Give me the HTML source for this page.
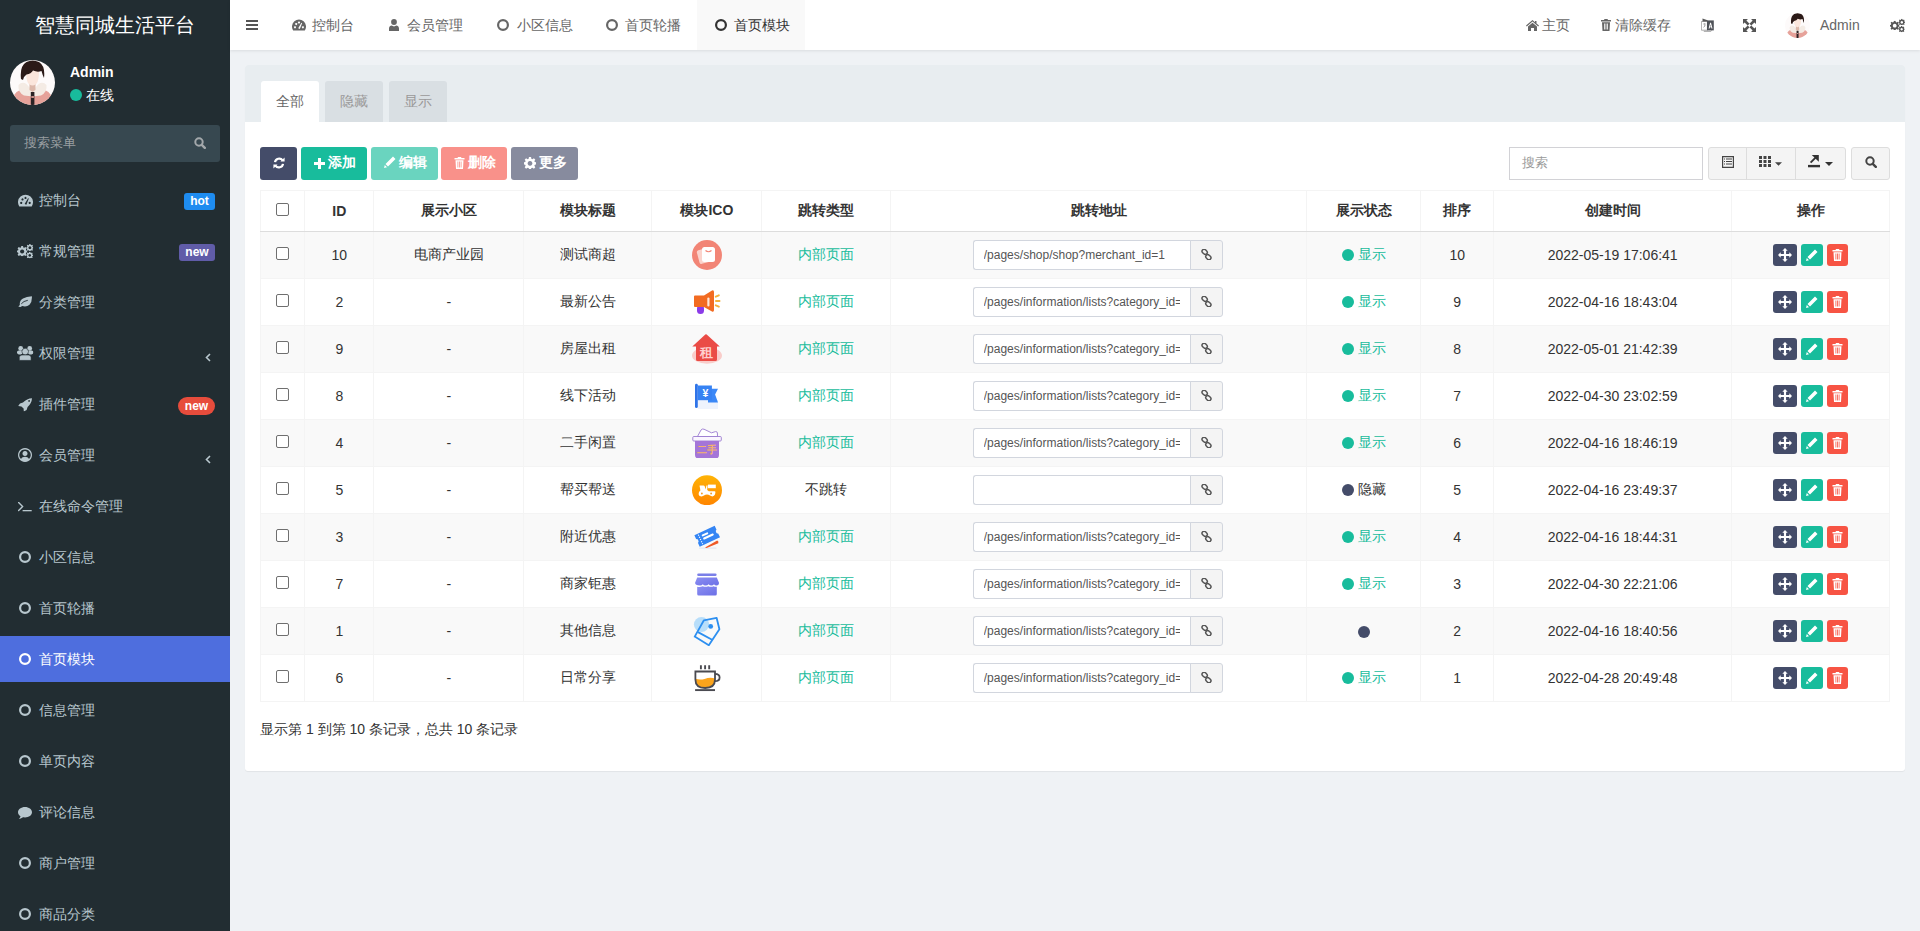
<!DOCTYPE html>
<html><head><meta charset="utf-8"><style>*{box-sizing:border-box}
html,body{margin:0;padding:0}
body{width:1920px;height:931px;overflow:hidden;position:relative;background:#eff2f5;font-family:"Liberation Sans",sans-serif;color:#333;font-size:14px}
.abs{position:absolute}
.nw{white-space:nowrap}
svg{display:block;overflow:visible}
#sb{position:absolute;left:0;top:0;width:230px;height:931px;background:#222d32;overflow:hidden}
#logo{position:absolute;left:0;top:0;width:230px;height:50px;line-height:50px;text-align:center;color:#fff;font-size:20px;white-space:nowrap}
.mi{position:absolute;left:0;width:230px;height:46px;color:#b8c7ce;font-size:14px}
.mi .tx{position:absolute;left:39px;top:0;line-height:46px;white-space:nowrap}
.mi.act{background:#4e6ede;color:#fff}
.badge{position:absolute;color:#fff;font-weight:bold;font-size:12px;text-align:center;line-height:17px;height:17px;border-radius:3px}
#hd{position:absolute;left:230px;top:0;width:1690px;height:50px;background:#fff;box-shadow:0 1px 3px rgba(0,0,0,0.09)}
#card{position:absolute;left:245px;top:65px;width:1660px;height:706px;background:#fff;border-radius:3px;overflow:hidden;box-shadow:0 1px 1px rgba(0,0,0,0.06)}
#ph{position:absolute;left:0;top:0;width:1660px;height:57px;background:#e8edf0}
.tab{position:absolute;top:16px;height:41px;width:58px;line-height:40px;text-align:center;font-size:14px;color:#999;background:#d9dfe3;border-radius:3px 3px 0 0}
.tab.act{background:#fff;color:#666}
.btn{position:absolute;top:82px;height:33px;border-radius:3px;color:#fff;font-size:14px;font-weight:bold;line-height:33px}
table{border-collapse:collapse;table-layout:fixed;position:absolute;left:15px;top:125px}
td,th{border:1px solid #f4f4f4;text-align:center;padding:0;font-size:14px;white-space:nowrap}
th{height:41px;font-weight:bold;color:#333;border-bottom:1px solid #ddd}
td{height:47px;color:#333}
tr.odd td{background:#f9f9f9}
.cb{display:inline-block;width:13px;height:13px;border:1px solid #6f6f6f;border-radius:2px;background:#fff;vertical-align:middle;position:relative;top:-3px}
.ig{display:inline-block;position:relative;left:-1px;width:250px;height:30px;vertical-align:middle;text-align:left}
.ig .in{position:absolute;left:0;top:0;width:218px;height:30px;border:1px solid #d2d6de;border-right:none;border-radius:3px 0 0 3px;background:#fff;font-size:12px;line-height:28px;padding-left:10px;color:#555;overflow:hidden;white-space:nowrap}
.ig .ad{position:absolute;left:217px;top:0;width:33px;height:30px;border:1px solid #d2d6de;border-radius:0 3px 3px 0;background:#f4f4f4}
.ok{color:#18bc9c}
.dot{display:inline-block;width:12px;height:12px;border-radius:50%;background:#18bc9c;vertical-align:-2px;margin-right:4px}
.ab{display:inline-block;height:22px;border-radius:3px;vertical-align:middle;position:relative}

.ig .cl{width:196px;overflow:hidden}
</style></head><body>
<svg width="0" height="0" style="position:absolute"><defs><symbol id="i-circle" viewBox="0 0 12 12"><circle cx="6" cy="6" r="4.9" fill="none" stroke="currentColor" stroke-width="2.2"/></symbol>
<symbol id="i-bars" viewBox="0 0 12 10"><rect x="0" y="0" width="12" height="2" fill="currentColor"/><rect x="0" y="4" width="12" height="2" fill="currentColor"/><rect x="0" y="8" width="12" height="2" fill="currentColor"/></symbol>
<symbol id="i-dash" viewBox="0 0 14 12"><path fill="currentColor" fill-rule="evenodd" d="M1.2 11.5A7 7 0 1 1 12.8 11.5Z M3 7.2a1 1 0 1 0 0.01 0Z M4.2 4a1 1 0 1 0 0.01 0Z M7 2.6a1 1 0 1 0 0.01 0Z M10.9 7.2a1 1 0 1 0 0.01 0Z M6.2 9.2L9.4 3.8L10.1 4.2L7.8 10Z"/></symbol>
<symbol id="i-user" viewBox="0 0 10 12"><circle cx="5" cy="3" r="2.9" fill="currentColor"/><path fill="currentColor" d="M0 12V9.6C0 7.5 1.4 6.6 2.6 6.6L5 7.6L7.4 6.6C8.6 6.6 10 7.5 10 9.6V12Z"/></symbol>
<symbol id="i-home" viewBox="0 0 13 11"><path fill="currentColor" d="M6.5 0L0 5.6L0.8 6.4L6.5 1.6L12.2 6.4L13 5.6L10.5 3.5V1H9V2.2Z M2 6.6L6.5 2.8L11 6.6V11H8V8H5V11H2Z"/></symbol>
<symbol id="i-trash" viewBox="0 0 10 12"><path fill="currentColor" fill-rule="evenodd" d="M3.5 0H6.5L7 1H10V2.5H0V1H3Z M1 3.2H9L8.5 12H1.5Z M3 4.5V10.5H3.8V4.5Z M4.6 4.5V10.5H5.4V4.5Z M6.2 4.5V10.5H7V4.5Z"/></symbol>
<symbol id="i-expand" viewBox="0 0 13 13"><path fill="currentColor" d="M0 0H5L3.4 1.6L6.5 4.7L4.7 6.5L1.6 3.4L0 5Z M13 0V5L11.4 3.4L8.3 6.5L6.5 4.7L9.6 1.6L8 0Z M0 13V8L1.6 9.6L4.7 6.5L6.5 8.3L3.4 11.4L5 13Z M13 13H8L9.6 11.4L6.5 8.3L8.3 6.5L11.4 9.6L13 8Z"/></symbol>
<symbol id="i-gear" viewBox="0 0 16 16"><path fill="currentColor" fill-rule="evenodd" d="M6.6 0H9.4L9.8 2.2L11.3 2.9L13.2 1.6L15.1 3.5L13.8 5.3L14.4 6.8L16 7.1V9.9L14.4 10.2L13.8 11.7L15.1 13.6L13.2 15.5L11.3 14.2L9.8 14.8L9.4 16H6.6L6.2 14.8L4.7 14.2L2.8 15.5L0.9 13.6L2.2 11.7L1.6 10.2L0 9.9V7.1L1.6 6.8L2.2 5.3L0.9 3.5L2.8 1.6L4.7 2.9L6.2 2.2Z M8 5.3A3.2 3.2 0 1 0 8.01 5.3Z"/></symbol>
<symbol id="i-cogs" viewBox="0 0 16.4 14.5"><use href="#i-gear" x="0" y="2" width="10.3" height="10.3"/><use href="#i-gear" x="9.4" y="0" width="7" height="7"/><use href="#i-gear" x="9.4" y="7.8" width="6.7" height="6.7"/></symbol>
<symbol id="i-refresh" viewBox="0 0 12 12"><path fill="none" stroke="currentColor" stroke-width="2.2" d="M2 5.2A4.2 4.2 0 0 1 9.6 3.4 M10 6.8A4.2 4.2 0 0 1 2.4 8.6"/><path fill="currentColor" d="M7.4 4.6H11.6V0.4Z M4.6 7.4H0.4V11.6Z"/></symbol>
<symbol id="i-plus" viewBox="0 0 11 11"><path fill="currentColor" d="M4 0H7V4H11V7H7V11H4V7H0V4H4Z"/></symbol>
<symbol id="i-pencil" viewBox="0 0 12 12"><path fill="currentColor" d="M9 0.5L11.5 3L4 10.5L1.5 8Z M0.8 9L3 11.2L0 12Z"/></symbol>
<symbol id="i-listalt" viewBox="0 0 12 12"><path fill="currentColor" fill-rule="evenodd" d="M0 0H12V12H0Z M1.2 1.2V10.8H10.8V1.2Z M2 2.5H3V3.5H2Z M4 2.5H10V3.5H4Z M2 5H3V6H2Z M4 5H10V6H4Z M2 7.5H3V8.5H2Z M4 7.5H10V8.5H4Z"/></symbol>
<symbol id="i-th" viewBox="0 0 12 11"><path fill="currentColor" d="M0 0H3V3H0Z M4.5 0H7.5V3H4.5Z M9 0H12V3H9Z M0 4H3V7H0Z M4.5 4H7.5V7H4.5Z M9 4H12V7H9Z M0 8H3V11H0Z M4.5 8H7.5V11H4.5Z M9 8H12V11H9Z"/></symbol>
<symbol id="i-caret" viewBox="0 0 8 4"><path fill="currentColor" d="M0 0H8L4 4Z"/></symbol>
<symbol id="i-export" viewBox="0 0 12.2 12.6"><rect x="0" y="9.9" width="12.1" height="2.7" fill="currentColor"/><path fill="currentColor" d="M3.8 0H10.8V6.7Z"/><path stroke="currentColor" stroke-width="1.9" d="M2.6 7.6L7.8 2.4"/></symbol>
<symbol id="i-search" viewBox="0 0 12 12"><circle cx="5" cy="5" r="3.7" fill="none" stroke="currentColor" stroke-width="2"/><path stroke="currentColor" stroke-width="2.4" stroke-linecap="round" d="M7.8 7.8L10.8 10.8"/></symbol>
<symbol id="i-link" viewBox="0 0 12 12"><g fill="none" stroke="currentColor" stroke-width="1.6"><rect x="0.9" y="0.9" width="6.2" height="4.4" rx="2.2" transform="rotate(45 4 3.1)"/><rect x="4.9" y="6.7" width="6.2" height="4.4" rx="2.2" transform="rotate(45 8 8.9)"/></g></symbol>
<symbol id="i-move" viewBox="0 0 13 13"><path fill="currentColor" d="M6.5 0L9 2.5H7.5V5.5H10.5V4L13 6.5L10.5 9V7.5H7.5V10.5H9L6.5 13L4 10.5H5.5V7.5H2.5V9L0 6.5L2.5 4V5.5H5.5V2.5H4Z"/></symbol>
<symbol id="i-leaf" viewBox="0 0 14.1 11.1"><path fill="currentColor" d="M0.3 10.6L1.9 9.1Q1 5 5 2.5Q8.5 0.5 13.9 0.3Q14.2 6 11.5 8.8Q8.5 11.5 4.2 10.1L2.4 11.1Z"/><path fill="none" stroke="#222d32" stroke-width="0.9" d="M3.3 7.8Q5.5 5 9.8 4.3"/></symbol>
<symbol id="i-users" viewBox="0 0 16.4 14.4"><circle cx="3.7" cy="2.4" r="2.4" fill="currentColor"/><circle cx="12.7" cy="2.4" r="2.4" fill="currentColor"/><rect x="0" y="4.4" width="5.6" height="4" rx="1.8" fill="currentColor"/><rect x="10.8" y="4.4" width="5.6" height="4" rx="1.8" fill="currentColor"/><circle cx="8.2" cy="5.6" r="3.3" fill="currentColor" stroke="#222d32" stroke-width="0.6"/><path fill="currentColor" stroke="#222d32" stroke-width="0.6" d="M2.3 14.4V11.6Q2.3 9 5 9H11.4Q14.1 9 14.1 11.6V14.4Z"/></symbol>
<symbol id="i-rocket" viewBox="0 0 14 13.4"><path fill="currentColor" d="M14 0.2Q13.8 5 9.6 9L8.6 12L5.8 13.4L5.6 10.6L3.4 8.4L0.2 8L2 5.5L5 4.6Q9 0.4 14 0.2Z"/><circle cx="11.1" cy="2.9" r="0.85" fill="#222d32"/></symbol>
<symbol id="i-ucircle" viewBox="0 0 14 14"><path fill="currentColor" fill-rule="evenodd" d="M7 0A7 7 0 1 0 7.01 0Z M7 1.4A5.6 5.6 0 0 0 3 11C3.8 9.6 5.2 8.8 7 8.8C8.8 8.8 10.2 9.6 11 11A5.6 5.6 0 0 0 7 1.4Z M7 3A2.5 2.5 0 1 0 7.01 3Z"/></symbol>
<symbol id="i-term" viewBox="0 0 14 10"><path fill="none" stroke="currentColor" stroke-width="1.4" stroke-linecap="round" d="M0.6 0.6L4.6 4.6L0.6 8.6"/><rect x="4.6" y="8" width="9.1" height="1.3" fill="currentColor"/></symbol>
<symbol id="i-comment" viewBox="0 0 14 12"><path fill="currentColor" d="M7 0C3.1 0 0 2.3 0 5.2C0 6.8 1 8.2 2.5 9.2C2.3 10.3 1.6 11.3 0.8 12C2.6 11.8 4 11.1 5 10.3C5.6 10.4 6.3 10.4 7 10.4C10.9 10.4 14 8.1 14 5.2C14 2.3 10.9 0 7 0Z"/></symbol>
<symbol id="i-angle" viewBox="0 0 6 9"><path fill="none" stroke="currentColor" stroke-width="1.6" d="M5 1L1.5 4.5L5 8"/></symbol>
<symbol id="i-lang" viewBox="0 0 13 14"><path fill="#fff" stroke="#8a8a8a" stroke-width="0.7" d="M0.4 3.5H6.4V12.2H0.4Z"/><path fill="#5a5a5a" d="M1.5 0.5L6.5 2.2V3.4H1.5Z"/><path fill="none" stroke="#999" stroke-width="0.6" d="M2 6H5 M3.5 5V9 M2.2 9.5L4.8 7"/><path fill="#4f5258" d="M6 2.4H12.8V12.4H6Z"/><path fill="#fff" d="M7.6 10.5L9.1 4.8H10L11.5 10.5H10.5L10.2 9.3H8.9L8.6 10.5Z M9.1 8.4H10L9.55 6.5Z"/><path fill="none" stroke="#777" stroke-width="0.7" d="M2.8 13.3H9.8L10.8 12.4"/></symbol>
<symbol id="c1" viewBox="0 0 30 30"><circle cx="15" cy="15" r="15" fill="#f28576"/><rect x="6" y="9" width="13" height="14" rx="2" fill="#fbd3cc" transform="rotate(-15 12 16)"/><rect x="10" y="7" width="13" height="15" rx="2.5" fill="#fff"/><path d="M13.5 10.5Q16.5 13 19.5 10.5" fill="none" stroke="#f28576" stroke-width="1.2"/></symbol>
<symbol id="c2" viewBox="0 0 30 30"><rect x="5" y="18" width="7" height="9" rx="3.5" fill="#8b3be8"/><path fill="#f26b21" d="M3 8.5H12L20 3.5Q22 2.8 22 5V23Q22 25.2 20 24.5L12 20H3Q2 20 2 19V9.5Q2 8.5 3 8.5Z"/><rect x="15.3" y="10.5" width="2.2" height="9" rx="1.1" fill="#ffe6d6"/><path stroke="#f3b23e" stroke-width="2" stroke-linecap="round" d="M23.8 9.6L26.8 8.4 M24 14H27.5 M23.8 18.4L26.8 19.6"/></symbol>
<symbol id="c3" viewBox="0 0 30 30"><ellipse cx="15" cy="21.5" rx="15" ry="8.3" fill="#f9cdca"/><path fill="#ea4c46" d="M13.3 0.6Q14 0 14.7 0.6L27.8 12.4H25V25.5Q25 27 23.5 27H5.5Q4 27 4 25.5V12.4H0.3Z"/><text x="14" y="22.6" font-size="12.5" font-weight="bold" fill="#ffd0cf" text-anchor="middle" font-family="Liberation Sans,sans-serif">租</text></symbol>
<symbol id="c4" viewBox="0 0 30 30"><rect x="6" y="19" width="20" height="9" fill="#eef3fd"/><path fill="#3b88f7" d="M16 7.7H26L23.1 13.6L26 21.4H16Z"/><path fill="#3682f3" d="M5.8 4.5H19.9V19.2H5.8Z"/><rect x="3" y="2.8" width="2.8" height="24.3" rx="1.4" fill="#2f74e8"/><text x="13.4" y="16.3" font-size="10.5" font-weight="bold" fill="#fff" text-anchor="middle" font-family="Liberation Sans,sans-serif">¥</text></symbol>
<symbol id="c5" viewBox="0 0 30 30"><path fill="#fff" stroke="#9b7bd0" stroke-width="0.9" d="M5.5 8.5L9 2Q10 0.5 12 1.2L19.5 4.8L23.5 3.6Q25.3 3.4 25.4 5L25.5 8.5Z"/><rect x="0.8" y="8.5" width="28.5" height="4.5" rx="1" fill="#fbf6ff" stroke="#9b7bd0" stroke-width="0.9"/><path fill="#a475d8" d="M3 13H27V27Q27 30.4 24 30.4H6Q3 30.4 3 27Z"/><text x="15" y="24.8" font-size="9.5" font-weight="bold" fill="#f5b46a" text-anchor="middle" font-family="Liberation Sans,sans-serif">二手</text></symbol>
<symbol id="c6" viewBox="0 0 30 30"><defs><linearGradient id="gsc" x1="0" y1="0" x2="0" y2="1"><stop offset="0" stop-color="#ffb406"/><stop offset="1" stop-color="#ff8500"/></linearGradient></defs><circle cx="15" cy="15.2" r="15" fill="url(#gsc)"/><rect x="16" y="9.6" width="7.8" height="3.6" fill="#fff"/><path fill="#fff" d="M7.6 10.6H11Q12.4 10.4 12.8 11.6L13.6 14.5L14.4 10.6H15.6L15.2 15L16.8 16.2H22.6Q23.6 16.2 23.4 17.6L23 19.6Q22.2 21.4 20.4 21.4Q19 21.4 18 20.6Q16.6 19.6 15 19.6Q13.4 19.6 12 20.6Q11 21.4 9.6 21.4Q7 21.4 6.6 19.2Q6.5 16.6 8.4 15.6L8 13Q7.6 12 7.6 10.6Z"/><circle cx="9.9" cy="18.5" r="0.9" fill="#f39a20"/><circle cx="19.1" cy="18.5" r="0.9" fill="#f39a20"/></symbol>
<symbol id="c7" viewBox="0 0 30 30"><rect x="7" y="25.6" width="17.5" height="1.2" rx="0.6" fill="#e3e8f2"/><path fill="#ef5a28" d="M13 25.4L25.2 18.6Q26.9 19.4 26.3 21.2L14.6 26.1Z"/><g transform="rotate(-25 15.2 14.3)"><path fill="#3485f4" d="M4 8H26.4V12.3Q25 12.3 25 14.3Q25 16.3 26.4 16.3V20.6H4V16.3Q5.4 16.3 5.4 14.3Q5.4 12.3 4 12.3Z"/><rect x="10.5" y="10.6" width="7" height="2" rx="1" fill="#fff"/><rect x="10.5" y="14" width="11.5" height="2" rx="1" fill="#fff"/><path stroke="#fff" stroke-width="1.1" stroke-dasharray="1.2 1.2" d="M7.8 9V19.5"/></g></symbol>
<symbol id="c8" viewBox="0 0 30 30"><defs><linearGradient id="gsh" x1="0" y1="0" x2="1" y2="1"><stop offset="0" stop-color="#8c8ff2"/><stop offset="1" stop-color="#6b6fe6"/></linearGradient></defs><rect x="5.2" y="4.5" width="19.4" height="2.6" rx="1.3" fill="#7a7fe8"/><path fill="url(#gsh)" d="M5.2 8.5H24.8L27 13.8Q27 16.5 24.6 16.5Q22.7 16.5 22 15.2Q21.2 16.5 19.4 16.5Q17.6 16.5 16.6 15.2Q15.8 16.5 13.4 16.5Q11.6 16.5 10.8 15.2Q10 16.5 8 16.5Q3 16.5 3.1 13.8Z"/><path fill="url(#gsh)" d="M5.2 17.7Q8 18.5 10.8 17.2Q13.4 18.5 16.2 17.2Q19 18.5 21.6 17.2Q23.2 18.2 24.8 17.7V25Q24.8 26.5 23.3 26.5H6.7Q5.2 26.5 5.2 25Z"/></symbol>
<symbol id="c9" viewBox="0 0 30 30"><circle cx="9.5" cy="8.5" r="7.6" fill="#b8defa"/><path fill="none" stroke="#2d8ff0" stroke-width="1.8" stroke-linejoin="round" d="M11.9 4.3L24.6 1.8L27.4 13.2L16.8 29.2L2.7 20.6Z"/><path stroke="#2d8ff0" stroke-width="1.8" d="M6 16.1L20.1 23.8"/><circle cx="18.7" cy="10.4" r="2.4" fill="#2d8ff0"/></symbol>
<symbol id="c10" viewBox="0 0 30 30"><path stroke="#4a4a50" stroke-width="1.9" d="M8.9 2.2V6.3 M13.1 2.2V6.3 M17.2 2.2V6.3"/><path fill="#fba41c" d="M3.4 15.8Q8 17.2 12.5 16Q18 14 23 15.5V16.5Q23 25 13 25Q3.4 25 3.4 17Z"/><path fill="none" stroke="#4a4a50" stroke-width="1.8" d="M3.4 8.5H23V16.5Q23 25 13.2 25Q3.4 25 3.4 16.5Z"/><path fill="none" stroke="#4a4a50" stroke-width="1.8" d="M23 10.8Q27.6 10.8 27.6 14.4Q27.6 18.1 23 18.1"/><path stroke="#4a4a50" stroke-width="1.9" d="M3.1 27.1H23"/></symbol>
</defs></svg>
<div id="sb"><div id="logo">智慧同城生活平台</div><svg class="abs" style="left:10px;top:60px" width="45" height="45" viewBox="0 0 45 45"><defs><clipPath id="avc10"><circle cx="22.5" cy="22.5" r="22.5"/></clipPath></defs><g clip-path="url(#avc10)"><rect width="45" height="45" fill="#fdfafa"/><path fill="#e6a29a" d="M1 45Q2 33 11 29.5L22.5 33L34 29.5Q43 33 44 45Z"/><path fill="#f4ebe4" d="M8.5 25Q12 21 16.5 24L22.5 31L28.5 24Q33 21 36.5 25Q37.5 32 31 35.5L22.5 36.5L14 35.5Q7.5 32 8.5 25Z"/><path fill="#dcb8aa" d="M19.5 22H25.5V30L22.5 32L19.5 30Z"/><path fill="#fbe6dc" d="M16 11Q15.8 25.5 22.5 25.5Q29.2 25.5 29 11Z"/><path fill="#2b1a17" d="M11 19Q9.5 6 16.5 2Q22.5 -1 29 2Q35.5 6 34 18Q32.5 15 31.5 11Q27.5 12.5 23 10.5Q21 14 16.5 14.5Q14 16 13 20Z"/><rect x="20.8" y="32" width="3.6" height="13" fill="#2a2224"/><path fill="#c98f88" d="M21.3 36H23.9V38H21.3Z"/></g></svg>
<div class="abs nw" style="left:70px;top:64px;color:#fff;font-weight:bold;font-size:14px;line-height:17px">Admin</div><div class="abs" style="left:70px;top:89px;width:12px;height:12px;border-radius:50%;background:#18bc9c"></div><div class="abs nw" style="left:86px;top:86px;color:#fff;font-size:14px;line-height:18px">在线</div><div class="abs" style="left:10px;top:125px;width:210px;height:37px;background:#374850;border-radius:3px"></div><div class="abs nw" style="left:24px;top:135px;color:#9a9fa2;font-size:13px;line-height:16px">搜索菜单</div><svg class="abs" style="left:194px;top:137px;color:#a3a8ab;" width="12" height="12"><use href="#i-search"/></svg><div class="mi" style="top:177px"><svg class="abs" style="left:18px;top:17px;color:#b8c7ce;" width="15" height="13"><use href="#i-dash"/></svg><span class="tx">控制台</span><span class="badge" style="left:184px;top:16px;width:31px;background:#1e8cf0">hot</span></div><div class="mi" style="top:228px"><svg class="abs" style="left:17px;top:16px;color:#b8c7ce;" width="16.4" height="14.5"><use href="#i-cogs"/></svg><span class="tx">常规管理</span><span class="badge" style="left:179px;top:16px;width:36px;background:#605ca8">new</span></div><div class="mi" style="top:279px"><svg class="abs" style="left:17.9px;top:16.8px;color:#b8c7ce;" width="14.1" height="11.1"><use href="#i-leaf"/></svg><span class="tx">分类管理</span></div><div class="mi" style="top:330px"><svg class="abs" style="left:16.7px;top:15.8px;color:#b8c7ce;" width="16.4" height="14.4"><use href="#i-users"/></svg><span class="tx">权限管理</span><svg class="abs" style="left:205px;top:23px;color:#b8c7ce;" width="6" height="9"><use href="#i-angle"/></svg></div><div class="mi" style="top:381px"><svg class="abs" style="left:18px;top:16.8px;color:#b8c7ce;" width="14" height="13.4"><use href="#i-rocket"/></svg><span class="tx">插件管理</span><span class="badge" style="left:178px;top:16px;width:37px;height:18px;line-height:18px;background:#e74c3c;border-radius:9px">new</span></div><div class="mi" style="top:432px"><svg class="abs" style="left:18px;top:16px;color:#b8c7ce;" width="14" height="14"><use href="#i-ucircle"/></svg><span class="tx">会员管理</span><svg class="abs" style="left:205px;top:23px;color:#b8c7ce;" width="6" height="9"><use href="#i-angle"/></svg></div><div class="mi" style="top:483px"><svg class="abs" style="left:18.3px;top:19px;color:#b8c7ce;" width="14" height="10"><use href="#i-term"/></svg><span class="tx">在线命令管理</span></div><div class="mi" style="top:534px"><svg class="abs" style="left:19px;top:17px;color:#b8c7ce;" width="12" height="12"><use href="#i-circle"/></svg><span class="tx">小区信息</span></div><div class="mi" style="top:585px"><svg class="abs" style="left:19px;top:17px;color:#b8c7ce;" width="12" height="12"><use href="#i-circle"/></svg><span class="tx">首页轮播</span></div><div class="mi act" style="top:636px"><svg class="abs" style="left:19px;top:17px;color:#fff;" width="12" height="12"><use href="#i-circle"/></svg><span class="tx">首页模块</span></div><div class="mi" style="top:687px"><svg class="abs" style="left:19px;top:17px;color:#b8c7ce;" width="12" height="12"><use href="#i-circle"/></svg><span class="tx">信息管理</span></div><div class="mi" style="top:738px"><svg class="abs" style="left:19px;top:17px;color:#b8c7ce;" width="12" height="12"><use href="#i-circle"/></svg><span class="tx">单页内容</span></div><div class="mi" style="top:789px"><svg class="abs" style="left:18px;top:18px;color:#b8c7ce;" width="14" height="12"><use href="#i-comment"/></svg><span class="tx">评论信息</span></div><div class="mi" style="top:840px"><svg class="abs" style="left:19px;top:17px;color:#b8c7ce;" width="12" height="12"><use href="#i-circle"/></svg><span class="tx">商户管理</span></div><div class="mi" style="top:891px"><svg class="abs" style="left:19px;top:17px;color:#b8c7ce;" width="12" height="12"><use href="#i-circle"/></svg><span class="tx">商品分类</span></div></div>
<div id="hd"><svg class="abs" style="left:16px;top:20px;color:#555;" width="12" height="10"><use href="#i-bars"/></svg><div class="abs" style="left:467px;top:0;width:108px;height:50px;background:#f9f9f9"></div><svg class="abs" style="left:62px;top:19px;color:#666;" width="14" height="12"><use href="#i-dash"/></svg><div class="abs nw" style="left:82px;top:0;line-height:50px;color:#666;font-size:14px">控制台</div><svg class="abs" style="left:159px;top:19px;color:#666;" width="10" height="12"><use href="#i-user"/></svg><div class="abs nw" style="left:177px;top:0;line-height:50px;color:#666;font-size:14px">会员管理</div><svg class="abs" style="left:267px;top:19px;color:#666;" width="12" height="12"><use href="#i-circle"/></svg><div class="abs nw" style="left:287px;top:0;line-height:50px;color:#666;font-size:14px">小区信息</div><svg class="abs" style="left:376px;top:19px;color:#666;" width="12" height="12"><use href="#i-circle"/></svg><div class="abs nw" style="left:395px;top:0;line-height:50px;color:#666;font-size:14px">首页轮播</div><svg class="abs" style="left:485px;top:19px;color:#333;" width="12" height="12"><use href="#i-circle"/></svg><div class="abs nw" style="left:504px;top:0;line-height:50px;color:#333;font-size:14px">首页模块</div><svg class="abs" style="left:1296px;top:20px;color:#666;" width="13" height="11"><use href="#i-home"/></svg><div class="abs nw" style="left:1312px;top:0;line-height:50px;color:#666;font-size:14px">主页</div><svg class="abs" style="left:1371px;top:19px;color:#666;" width="10" height="12"><use href="#i-trash"/></svg><div class="abs nw" style="left:1385px;top:0;line-height:50px;color:#666;font-size:14px">清除缓存</div><svg class="abs" style="left:1471px;top:18px;" width="13" height="14"><use href="#i-lang"/></svg><svg class="abs" style="left:1513px;top:19px;color:#555;" width="13" height="13"><use href="#i-expand"/></svg><svg class="abs" style="left:1555px;top:13px" width="25" height="25" viewBox="0 0 45 45"><defs><clipPath id="avc1555"><circle cx="22.5" cy="22.5" r="22.5"/></clipPath></defs><g clip-path="url(#avc1555)"><rect width="45" height="45" fill="#fdfafa"/><path fill="#e6a29a" d="M1 45Q2 33 11 29.5L22.5 33L34 29.5Q43 33 44 45Z"/><path fill="#f4ebe4" d="M8.5 25Q12 21 16.5 24L22.5 31L28.5 24Q33 21 36.5 25Q37.5 32 31 35.5L22.5 36.5L14 35.5Q7.5 32 8.5 25Z"/><path fill="#dcb8aa" d="M19.5 22H25.5V30L22.5 32L19.5 30Z"/><path fill="#fbe6dc" d="M16 11Q15.8 25.5 22.5 25.5Q29.2 25.5 29 11Z"/><path fill="#2b1a17" d="M11 19Q9.5 6 16.5 2Q22.5 -1 29 2Q35.5 6 34 18Q32.5 15 31.5 11Q27.5 12.5 23 10.5Q21 14 16.5 14.5Q14 16 13 20Z"/><rect x="20.8" y="32" width="3.6" height="13" fill="#2a2224"/><path fill="#c98f88" d="M21.3 36H23.9V38H21.3Z"/></g></svg>
<div class="abs nw" style="left:1590px;top:0;line-height:50px;color:#666;font-size:14px">Admin</div><svg class="abs" style="left:1660px;top:18px;color:#555;" width="15" height="15"><use href="#i-cogs"/></svg></div>
<div id="card"><div id="ph"><div class="tab act" style="left:16px">全部</div><div class="tab" style="left:80px">隐藏</div><div class="tab" style="left:144px">显示</div></div><div class="btn" style="left:15px;width:37px;background:#444c69"><svg class="abs" style="left:13px;top:10px;color:#fff;" width="12" height="12"><use href="#i-refresh"/></svg></div><div class="btn" style="left:56px;width:66px;background:#18bc9c"><svg class="abs" style="left:13px;top:11px;color:#fff;" width="11" height="11"><use href="#i-plus"/></svg><span class="abs nw" style="left:27px;top:-1px">添加</span></div><div class="btn" style="left:126px;width:67px;background:#6ad4bf"><svg class="abs" style="left:13px;top:9px;color:#fff;" width="12" height="12"><use href="#i-pencil"/></svg><span class="abs nw" style="left:28px;top:-1px">编辑</span></div><div class="btn" style="left:196px;width:66px;background:#f9918a"><svg class="abs" style="left:13px;top:10px;color:#fff;" width="11" height="12"><use href="#i-trash"/></svg><span class="abs nw" style="left:27px;top:-1px">删除</span></div><div class="btn" style="left:266px;width:67px;background:#878b9e"><svg class="abs" style="left:13px;top:10px;color:#fff;" width="12" height="12"><use href="#i-gear"/></svg><span class="abs nw" style="left:28px;top:-1px">更多</span></div><div class="abs" style="left:1264px;top:82px;width:194px;height:33px;border:1px solid #d2d2d6;background:#fff"></div><div class="abs nw" style="left:1277px;top:90px;color:#999;font-size:13px;line-height:16px">搜索</div><div class="abs" style="left:1463px;top:82px;width:138px;height:33px;border:1px solid #ddd;background:#f4f4f4;border-radius:3px"></div><div class="abs" style="left:1501px;top:82px;width:1px;height:33px;background:#ddd"></div><div class="abs" style="left:1550px;top:82px;width:1px;height:33px;background:#ddd"></div><svg class="abs" style="left:1477px;top:91px;color:#444;" width="12" height="12"><use href="#i-listalt"/></svg><svg class="abs" style="left:1514px;top:91px;color:#444;" width="12" height="11"><use href="#i-th"/></svg><svg class="abs" style="left:1530px;top:97px;color:#444;" width="7" height="4"><use href="#i-caret"/></svg><svg class="abs" style="left:1563.3px;top:90px;color:#333;" width="12.2" height="12.6"><use href="#i-export"/></svg><svg class="abs" style="left:1580px;top:97px;color:#333;" width="8" height="4"><use href="#i-caret"/></svg><div class="abs" style="left:1606px;top:82px;width:39px;height:33px;border:1px solid #ddd;background:#f4f4f4;border-radius:3px"></div><svg class="abs" style="left:1620px;top:91px;color:#444;" width="12" height="12"><use href="#i-search"/></svg><table style="width:1629.5px"><colgroup><col style="width:44.4px"><col style="width:68.9px"><col style="width:150px"><col style="width:128.2px"><col style="width:109.8px"><col style="width:129px"><col style="width:416px"><col style="width:114px"><col style="width:72.8px"><col style="width:238.2px"><col style="width:158.2px"></colgroup><tr><th><span class="cb"></span></th><th>ID</th><th>展示小区</th><th>模块标题</th><th>模块ICO</th><th>跳转类型</th><th>跳转地址</th><th>展示状态</th><th>排序</th><th>创建时间</th><th>操作</th></tr><tr class="odd"><td><span class="cb"></span></td><td>10</td><td>电商产业园</td><td>测试商超</td><td><svg width="30" height="30" style="display:inline-block;vertical-align:middle"><use href="#c1"/></svg></td><td><span class="ok">内部页面</span></td><td><div class="ig"><div class="in"><div class="cl">/pages/shop/shop?merchant_id=1</div></div><div class="ad"><svg class="abs" style="left:10px;top:8px;color:#555;" width="11" height="11"><use href="#i-link"/></svg></div></div></td><td><span class="dot"></span><span class="ok">显示</span></td><td>10</td><td>2022-05-19 17:06:41</td><td><span class="ab" style="width:24px;background:#444c69"><svg class="abs" style="left:5px;top:4px;color:#fff;" width="14" height="14"><use href="#i-move"/></svg></span><span class="ab" style="width:22px;background:#18bc9c;margin-left:4px"><svg class="abs" style="left:5px;top:5px;color:#fff;" width="12" height="12"><use href="#i-pencil"/></svg></span><span class="ab" style="width:21px;background:#f75444;margin-left:4px"><svg class="abs" style="left:5px;top:5px;color:#fff;" width="11" height="12"><use href="#i-trash"/></svg></span></td></tr><tr><td><span class="cb"></span></td><td>2</td><td>-</td><td>最新公告</td><td><svg width="30" height="30" style="display:inline-block;vertical-align:middle"><use href="#c2"/></svg></td><td><span class="ok">内部页面</span></td><td><div class="ig"><div class="in"><div class="cl">/pages/information/lists?category_id=</div></div><div class="ad"><svg class="abs" style="left:10px;top:8px;color:#555;" width="11" height="11"><use href="#i-link"/></svg></div></div></td><td><span class="dot"></span><span class="ok">显示</span></td><td>9</td><td>2022-04-16 18:43:04</td><td><span class="ab" style="width:24px;background:#444c69"><svg class="abs" style="left:5px;top:4px;color:#fff;" width="14" height="14"><use href="#i-move"/></svg></span><span class="ab" style="width:22px;background:#18bc9c;margin-left:4px"><svg class="abs" style="left:5px;top:5px;color:#fff;" width="12" height="12"><use href="#i-pencil"/></svg></span><span class="ab" style="width:21px;background:#f75444;margin-left:4px"><svg class="abs" style="left:5px;top:5px;color:#fff;" width="11" height="12"><use href="#i-trash"/></svg></span></td></tr><tr class="odd"><td><span class="cb"></span></td><td>9</td><td>-</td><td>房屋出租</td><td><svg width="30" height="30" style="display:inline-block;vertical-align:middle"><use href="#c3"/></svg></td><td><span class="ok">内部页面</span></td><td><div class="ig"><div class="in"><div class="cl">/pages/information/lists?category_id=</div></div><div class="ad"><svg class="abs" style="left:10px;top:8px;color:#555;" width="11" height="11"><use href="#i-link"/></svg></div></div></td><td><span class="dot"></span><span class="ok">显示</span></td><td>8</td><td>2022-05-01 21:42:39</td><td><span class="ab" style="width:24px;background:#444c69"><svg class="abs" style="left:5px;top:4px;color:#fff;" width="14" height="14"><use href="#i-move"/></svg></span><span class="ab" style="width:22px;background:#18bc9c;margin-left:4px"><svg class="abs" style="left:5px;top:5px;color:#fff;" width="12" height="12"><use href="#i-pencil"/></svg></span><span class="ab" style="width:21px;background:#f75444;margin-left:4px"><svg class="abs" style="left:5px;top:5px;color:#fff;" width="11" height="12"><use href="#i-trash"/></svg></span></td></tr><tr><td><span class="cb"></span></td><td>8</td><td>-</td><td>线下活动</td><td><svg width="30" height="30" style="display:inline-block;vertical-align:middle"><use href="#c4"/></svg></td><td><span class="ok">内部页面</span></td><td><div class="ig"><div class="in"><div class="cl">/pages/information/lists?category_id=</div></div><div class="ad"><svg class="abs" style="left:10px;top:8px;color:#555;" width="11" height="11"><use href="#i-link"/></svg></div></div></td><td><span class="dot"></span><span class="ok">显示</span></td><td>7</td><td>2022-04-30 23:02:59</td><td><span class="ab" style="width:24px;background:#444c69"><svg class="abs" style="left:5px;top:4px;color:#fff;" width="14" height="14"><use href="#i-move"/></svg></span><span class="ab" style="width:22px;background:#18bc9c;margin-left:4px"><svg class="abs" style="left:5px;top:5px;color:#fff;" width="12" height="12"><use href="#i-pencil"/></svg></span><span class="ab" style="width:21px;background:#f75444;margin-left:4px"><svg class="abs" style="left:5px;top:5px;color:#fff;" width="11" height="12"><use href="#i-trash"/></svg></span></td></tr><tr class="odd"><td><span class="cb"></span></td><td>4</td><td>-</td><td>二手闲置</td><td><svg width="30" height="30" style="display:inline-block;vertical-align:middle"><use href="#c5"/></svg></td><td><span class="ok">内部页面</span></td><td><div class="ig"><div class="in"><div class="cl">/pages/information/lists?category_id=</div></div><div class="ad"><svg class="abs" style="left:10px;top:8px;color:#555;" width="11" height="11"><use href="#i-link"/></svg></div></div></td><td><span class="dot"></span><span class="ok">显示</span></td><td>6</td><td>2022-04-16 18:46:19</td><td><span class="ab" style="width:24px;background:#444c69"><svg class="abs" style="left:5px;top:4px;color:#fff;" width="14" height="14"><use href="#i-move"/></svg></span><span class="ab" style="width:22px;background:#18bc9c;margin-left:4px"><svg class="abs" style="left:5px;top:5px;color:#fff;" width="12" height="12"><use href="#i-pencil"/></svg></span><span class="ab" style="width:21px;background:#f75444;margin-left:4px"><svg class="abs" style="left:5px;top:5px;color:#fff;" width="11" height="12"><use href="#i-trash"/></svg></span></td></tr><tr><td><span class="cb"></span></td><td>5</td><td>-</td><td>帮买帮送</td><td><svg width="30" height="30" style="display:inline-block;vertical-align:middle"><use href="#c6"/></svg></td><td>不跳转</td><td><div class="ig"><div class="in"><div class="cl"></div></div><div class="ad"><svg class="abs" style="left:10px;top:8px;color:#555;" width="11" height="11"><use href="#i-link"/></svg></div></div></td><td><span class="dot" style="background:#444c69"></span>隐藏</td><td>5</td><td>2022-04-16 23:49:37</td><td><span class="ab" style="width:24px;background:#444c69"><svg class="abs" style="left:5px;top:4px;color:#fff;" width="14" height="14"><use href="#i-move"/></svg></span><span class="ab" style="width:22px;background:#18bc9c;margin-left:4px"><svg class="abs" style="left:5px;top:5px;color:#fff;" width="12" height="12"><use href="#i-pencil"/></svg></span><span class="ab" style="width:21px;background:#f75444;margin-left:4px"><svg class="abs" style="left:5px;top:5px;color:#fff;" width="11" height="12"><use href="#i-trash"/></svg></span></td></tr><tr class="odd"><td><span class="cb"></span></td><td>3</td><td>-</td><td>附近优惠</td><td><svg width="30" height="30" style="display:inline-block;vertical-align:middle"><use href="#c7"/></svg></td><td><span class="ok">内部页面</span></td><td><div class="ig"><div class="in"><div class="cl">/pages/information/lists?category_id=</div></div><div class="ad"><svg class="abs" style="left:10px;top:8px;color:#555;" width="11" height="11"><use href="#i-link"/></svg></div></div></td><td><span class="dot"></span><span class="ok">显示</span></td><td>4</td><td>2022-04-16 18:44:31</td><td><span class="ab" style="width:24px;background:#444c69"><svg class="abs" style="left:5px;top:4px;color:#fff;" width="14" height="14"><use href="#i-move"/></svg></span><span class="ab" style="width:22px;background:#18bc9c;margin-left:4px"><svg class="abs" style="left:5px;top:5px;color:#fff;" width="12" height="12"><use href="#i-pencil"/></svg></span><span class="ab" style="width:21px;background:#f75444;margin-left:4px"><svg class="abs" style="left:5px;top:5px;color:#fff;" width="11" height="12"><use href="#i-trash"/></svg></span></td></tr><tr><td><span class="cb"></span></td><td>7</td><td>-</td><td>商家钜惠</td><td><svg width="30" height="30" style="display:inline-block;vertical-align:middle"><use href="#c8"/></svg></td><td><span class="ok">内部页面</span></td><td><div class="ig"><div class="in"><div class="cl">/pages/information/lists?category_id=</div></div><div class="ad"><svg class="abs" style="left:10px;top:8px;color:#555;" width="11" height="11"><use href="#i-link"/></svg></div></div></td><td><span class="dot"></span><span class="ok">显示</span></td><td>3</td><td>2022-04-30 22:21:06</td><td><span class="ab" style="width:24px;background:#444c69"><svg class="abs" style="left:5px;top:4px;color:#fff;" width="14" height="14"><use href="#i-move"/></svg></span><span class="ab" style="width:22px;background:#18bc9c;margin-left:4px"><svg class="abs" style="left:5px;top:5px;color:#fff;" width="12" height="12"><use href="#i-pencil"/></svg></span><span class="ab" style="width:21px;background:#f75444;margin-left:4px"><svg class="abs" style="left:5px;top:5px;color:#fff;" width="11" height="12"><use href="#i-trash"/></svg></span></td></tr><tr class="odd"><td><span class="cb"></span></td><td>1</td><td>-</td><td>其他信息</td><td><svg width="30" height="30" style="display:inline-block;vertical-align:middle"><use href="#c9"/></svg></td><td><span class="ok">内部页面</span></td><td><div class="ig"><div class="in"><div class="cl">/pages/information/lists?category_id=</div></div><div class="ad"><svg class="abs" style="left:10px;top:8px;color:#555;" width="11" height="11"><use href="#i-link"/></svg></div></div></td><td><span class="dot" style="background:#444c69;margin-right:0"></span></td><td>2</td><td>2022-04-16 18:40:56</td><td><span class="ab" style="width:24px;background:#444c69"><svg class="abs" style="left:5px;top:4px;color:#fff;" width="14" height="14"><use href="#i-move"/></svg></span><span class="ab" style="width:22px;background:#18bc9c;margin-left:4px"><svg class="abs" style="left:5px;top:5px;color:#fff;" width="12" height="12"><use href="#i-pencil"/></svg></span><span class="ab" style="width:21px;background:#f75444;margin-left:4px"><svg class="abs" style="left:5px;top:5px;color:#fff;" width="11" height="12"><use href="#i-trash"/></svg></span></td></tr><tr><td><span class="cb"></span></td><td>6</td><td>-</td><td>日常分享</td><td><svg width="30" height="30" style="display:inline-block;vertical-align:middle"><use href="#c10"/></svg></td><td><span class="ok">内部页面</span></td><td><div class="ig"><div class="in"><div class="cl">/pages/information/lists?category_id=</div></div><div class="ad"><svg class="abs" style="left:10px;top:8px;color:#555;" width="11" height="11"><use href="#i-link"/></svg></div></div></td><td><span class="dot"></span><span class="ok">显示</span></td><td>1</td><td>2022-04-28 20:49:48</td><td><span class="ab" style="width:24px;background:#444c69"><svg class="abs" style="left:5px;top:4px;color:#fff;" width="14" height="14"><use href="#i-move"/></svg></span><span class="ab" style="width:22px;background:#18bc9c;margin-left:4px"><svg class="abs" style="left:5px;top:5px;color:#fff;" width="12" height="12"><use href="#i-pencil"/></svg></span><span class="ab" style="width:21px;background:#f75444;margin-left:4px"><svg class="abs" style="left:5px;top:5px;color:#fff;" width="11" height="12"><use href="#i-trash"/></svg></span></td></tr></table><div class="abs nw" style="left:15px;top:655px;font-size:14px;color:#333;line-height:18px">显示第 1 到第 10 条记录，总共 10 条记录</div></div>
</body></html>
